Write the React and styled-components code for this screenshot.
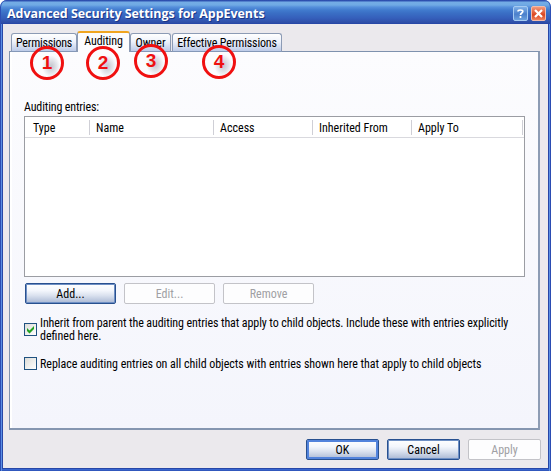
import React, { useState } from 'react';
import styled, { createGlobalStyle } from 'styled-components';

const GlobalStyle = createGlobalStyle`
  body {
    margin: 0;
    background: #fff;
  }
  * {
    box-sizing: border-box;
  }
  button {
    font: inherit;
  }
`;

const Dialog = styled.div`
  position: relative;
  display: flex;
  flex-direction: column;
  width: 551px;
  height: 471px;
  overflow: hidden;
  border-radius: 7px 7px 0 0;
  background: #2c50b8;
  font-family: Roboto, "Liberation Sans", sans-serif;
  font-size: 12px;
  font-stretch: 75%;
  line-height: 13px;
  color: #000;
`;

const TitleBar = styled.header`
  display: flex;
  align-items: center;
  flex: none;
  height: 24px;
  padding: 3px 5px 0 7px;
  border-radius: 7px 7px 0 0;
  box-shadow: inset 1px 0 #2d4fb5, inset -1px 0 #2d4fb5;
  background: linear-gradient(#2a48a8 0, #3157b5 1px, #74ace5 2px, #70aae4 5px, #5690db 7px, #417bce 10px, #3a6fc5 13px, #355fbb 18px, #2f50aa 22px, #2949a2 24px);
`;

const Title = styled.h1`
  flex: 1;
  margin: 0;
  font-family: "Open Sans", "Noto Sans", sans-serif;
  font-size: 12.5px;
  font-stretch: 100%;
  font-weight: 700;
  line-height: 18px;
  letter-spacing: ${p => p.$spacing}px;
  white-space: nowrap;
  color: #fff;
  text-shadow: 1px 1px #1c3686;
`;

const TitleButton = styled.button`
  display: flex;
  align-items: center;
  justify-content: center;
  width: 15px;
  height: 15px;
  margin-left: 3px;
  padding: 0;
  border: 1px solid ${p => p.$close ? '#f3bba9' : '#a6cbf1'};
  border-radius: 2px;
  background: ${p => p.$close
    ? 'linear-gradient(#f39a7c, #df5430 50%, #d94620 60%, #f0825c)'
    : 'linear-gradient(#7fb0e7, #4a7fcb 55%, #6ca1dd)'};
`;

const Frame = styled.div`
  flex: 1;
  padding: 0 3px 3px;
  background: #3866d0;
  box-shadow: inset 1px 0 #2b4cb2, inset 2px 0 #5b8fe4, inset -1px 0 #2b4cb2, inset -2px 0 #5b8fe4, inset 0 -1px #3158bd;
`;

const Body = styled.div`
  display: flex;
  flex-direction: column;
  height: 100%;
  padding: 7px 7px 0 6px;
  background: #ebe9ed;
  box-shadow: 0 0 0 1px #2747a7;
`;

const TabRow = styled.div`
  display: flex;
  align-items: flex-end;
  height: 21px;
  padding-left: 2px;
  margin-bottom: -1px;
`;

const Tab = styled.button`
  position: relative;
  z-index: ${p => p.$active ? 1 : 0};
  flex: none;
  width: ${p => p.$width}px;
  height: ${p => p.$active ? 21 : 19}px;
  margin-left: ${p => p.$gap || 0}px;
  padding: ${p => p.$active ? '0 0 2px' : '1px 0 0'};
  border: 1px solid #8c9bb5;
  border-top: ${p => p.$active ? '2px solid #f0a520' : '1px solid #8c9bb5'};
  border-bottom: ${p => p.$active ? 'none' : '1px solid #8498b8'};
  border-radius: 3px 3px 0 0;
  background: ${p => p.$active ? '#fcfcfe' : 'linear-gradient(#fff, #eef2fb 45%, #bdcbe8)'};
  letter-spacing: ${p => p.$spacing || 0}px;
  line-height: 15px;
  white-space: nowrap;
  color: #000;
`;

const Panel = styled.section`
  display: flex;
  flex-direction: column;
  width: 531px;
  height: 379px;
  padding: 49px 14px 0;
  border: 1px solid #7f92ae;
  border-right: 2px solid #8d9cb4;
  border-bottom: 2px solid #8596b0;
  background: linear-gradient(#fcfcfe, #f4f5fc);
  box-shadow: inset 2px 0 #fff;
`;

const Text = styled.span`
  display: block;
  letter-spacing: ${p => p.$spacing || 0}px;
  white-space: nowrap;
`;

const EntryList = styled.div`
  flex: none;
  width: 501px;
  height: 161px;
  margin-top: 2px;
  border: 1px solid #9b9da3;
  background: #fff;
`;

const HeaderRow = styled.div`
  display: flex;
  height: 21px;
  padding: 3px 0 2px;
  border-bottom: 1px solid #d9d9de;
`;

const HeaderCell = styled.div`
  width: ${p => p.$width}px;
  padding: 2px 0 0 ${p => p.$indent || 6}px;
  border-right: 1px solid #cfcfd6;
  white-space: nowrap;
`;

const ButtonRow = styled.div`
  display: flex;
  gap: 8px;
  justify-content: ${p => p.$end ? 'flex-end' : 'flex-start'};
  margin: ${p => p.$end ? '9px 0 0' : '6px 0 0 1px'};
`;

const Button = styled.button`
  width: ${p => p.$width}px;
  height: 21px;
  padding: 1px 0 0;
  border: 1px solid #28508f;
  border-radius: 2px;
  background: linear-gradient(#fff, #f3f6fc 35%, #dbe2ef 60%, #a9b8d4);
  box-shadow: ${p => p.$primary ? 'inset 0 0 0 2px #5283dc' : 'inset 0 0 0 1px #6e8fc4'};
  color: #000;

  &:disabled {
    border-color: #c3c3c8;
    background: #fdfdfe;
    box-shadow: none;
    color: #a0a0a4;
  }
`;

const Option = styled.label`
  display: flex;
  align-items: center;
  gap: 3px;
  margin-top: ${p => p.$top}px;
`;

const OptionText = styled.div`
  padding-top: 2px;
`;

const Box = styled.span`
  display: flex;
  align-items: center;
  justify-content: center;
  flex: none;
  width: 13px;
  height: 13px;
  border: 1px solid #1f5180;
  background: linear-gradient(135deg, #dcdcd8, #fff);
`;

const HiddenInput = styled.input`
  display: none;
`;

const Marker = styled.div`
  position: absolute;
  z-index: 2;
  top: ${p => p.$y}px;
  left: ${p => p.$x}px;
  width: 34px;
  height: 34px;
  border: 3px solid #f01010;
  border-radius: 50%;
  background: radial-gradient(ellipse 9px 11px at 65% 62%, rgba(165, 168, 178, 0.65), rgba(190, 194, 204, 0.4) 60%, rgba(210, 214, 222, 0) 100%);
  font-family: "Liberation Sans", Arial, sans-serif;
  font-size: 19px;
  font-weight: 700;
  line-height: 28px;
  text-align: center;
  color: #ee1111;
`;

const tabs = [
  { label: 'Permissions', width: 66, spacing: -0.25 },
  { label: 'Auditing', width: 53, spacing: -0.1 },
  { label: 'Owner', width: 41 },
  { label: 'Effective Permissions', width: 110, gap: 1, spacing: -0.15 }
];

const columns = [
  { label: 'Type', width: 65, indent: 8 },
  { label: 'Name', width: 124 },
  { label: 'Access', width: 99 },
  { label: 'Inherited From', width: 99 },
  { label: 'Apply To', width: 111 }
];

const markers = [
  { x: 30, y: 46 },
  { x: 86, y: 46 },
  { x: 134, y: 44 },
  { x: 202, y: 45 }
];

function CheckOption({ top, defaultChecked, children }) {
  const [checked, setChecked] = useState(defaultChecked);

  return (
    <Option $top={top}>
      <HiddenInput type="checkbox" checked={checked} onChange={() => setChecked(!checked)} />
      <Box>
        {checked && (
          <svg width="9" height="9" viewBox="0 0 9 9">
            <path d="M1 3v3l2.500 2.500L8 4V1L3.500 5.500z" fill="#21a121" />
          </svg>
        )}
      </Box>
      <OptionText>{children}</OptionText>
    </Option>
  );
}

function App() {
  const [active, setActive] = useState('Auditing');

  return (
    <>
      <GlobalStyle />
      <Dialog>
        <TitleBar>
          <Title $spacing={-0.05}>Advanced Security Settings for AppEvents</Title>
          <TitleButton>
            <svg width="7" height="9" viewBox="0 0 7 9" fill="none" stroke="#fff" strokeWidth="1.7">
              <path d="M1 2.500C1 .5 5.800 .5 5.800 2.500C5.800 4 3.500 4 3.500 6M3.500 7v2" />
            </svg>
          </TitleButton>
          <TitleButton $close>
            <svg width="9" height="9" viewBox="0 0 9 9" stroke="#fff" strokeWidth="2.200">
              <path d="M1 1l7 7M8 1l-7 7" />
            </svg>
          </TitleButton>
        </TitleBar>
        <Frame>
          <Body>
            <TabRow>
              {tabs.map(t => (
                <Tab
                  key={t.label}
                  $width={t.width}
                  $gap={t.gap}
                  $spacing={t.spacing}
                  $active={t.label === active}
                  onClick={() => setActive(t.label)}
                >
                  {t.label}
                </Tab>
              ))}
            </TabRow>
            <Panel>
              <Text $spacing={-0.15}>Auditing entries:</Text>
              <EntryList>
                <HeaderRow>
                  {columns.map(c => (
                    <HeaderCell key={c.label} $width={c.width} $indent={c.indent}>
                      {c.label}
                    </HeaderCell>
                  ))}
                </HeaderRow>
              </EntryList>
              <ButtonRow>
                <Button $width={91}>Add...</Button>
                <Button $width={91} disabled>Edit...</Button>
                <Button $width={91} disabled>Remove</Button>
              </ButtonRow>
              <CheckOption top={11} defaultChecked={true}>
                <Text $spacing={-0.1}>Inherit from parent the auditing entries that apply to child objects. Include these with entries explicitly</Text>
                <Text>defined here.</Text>
              </CheckOption>
              <CheckOption top={13} defaultChecked={false}>
                <Text $spacing={-0.04}>Replace auditing entries on all child objects with entries shown here that apply to child objects</Text>
              </CheckOption>
            </Panel>
            <ButtonRow $end>
              <Button $width={73} $primary>OK</Button>
              <Button $width={73}>Cancel</Button>
              <Button $width={73} disabled>Apply</Button>
            </ButtonRow>
          </Body>
        </Frame>
        {markers.map((m, i) => (
          <Marker key={i} $x={m.x} $y={m.y}>{i + 1}</Marker>
        ))}
      </Dialog>
    </>
  );
}

export default App;
